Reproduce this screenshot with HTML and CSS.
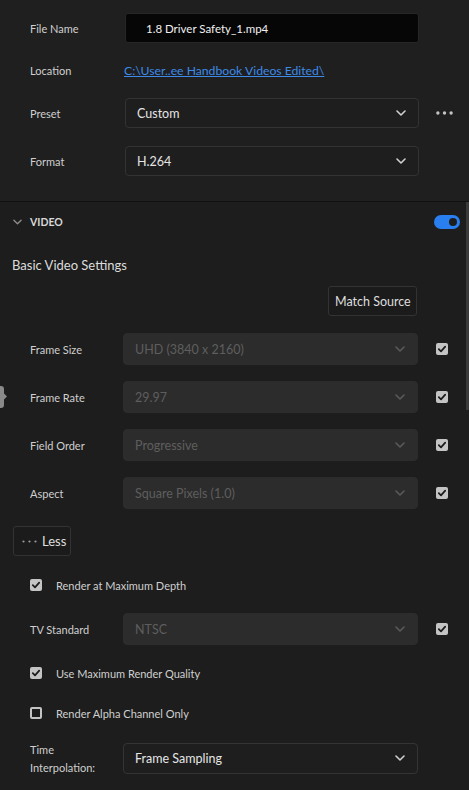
FILE: index.html
```html
<!DOCTYPE html>
<html>
<head>
<meta charset="utf-8">
<link rel="stylesheet" href="styles.css">
</head>
<body>
<div class="panel">
  <section class="top">
    <div class="trow r1">
      <span class="label">File Name</span>
      <div class="input">1.8 Driver Safety_1.mp4</div>
    </div>
    <div class="trow r2">
      <span class="label">Location</span>
      <a class="link" href="#">C:\User..ee Handbook Videos Edited\</a>
    </div>
    <div class="trow r3">
      <span class="label">Preset</span>
      <div class="select">Custom<svg class="chev" viewBox="0 0 10 6"><path d="M1 1l4 4 4-4"/></svg></div>
      <svg class="more" viewBox="0 0 18 4"><circle cx="2" cy="2" r="1.8"/><circle cx="9" cy="2" r="1.8"/><circle cx="16" cy="2" r="1.8"/></svg>
    </div>
    <div class="trow r4">
      <span class="label">Format</span>
      <div class="select">H.264<svg class="chev" viewBox="0 0 10 6"><path d="M1 1l4 4 4-4"/></svg></div>
    </div>
  </section>

  <section class="video">
    <div class="vhead">
      <svg class="hchev" viewBox="0 0 10 6"><path d="M1 1l4 4 4-4"/></svg>
      <span class="vtitle">VIDEO</span>
      <span class="toggle"><span class="knob"></span></span>
    </div>
    <div class="subtitle">Basic Video Settings</div>
    <div class="matchrow"><button class="btn">Match Source</button></div>

    <div class="srow first">
      <span class="label">Frame Size</span>
      <div class="select dis">UHD (3840 x 2160)<svg class="chev" viewBox="0 0 10 6"><path d="M1 1l4 4 4-4"/></svg></div>
      <span class="cb on"><svg viewBox="0 0 12 12"><path d="M2.8 6.2l2.2 2.2 4.2-4.8"/></svg></span>
    </div>
    <div class="srow">
      <span class="label">Frame Rate</span>
      <div class="select dis">29.97<svg class="chev" viewBox="0 0 10 6"><path d="M1 1l4 4 4-4"/></svg></div>
      <span class="cb on"><svg viewBox="0 0 12 12"><path d="M2.8 6.2l2.2 2.2 4.2-4.8"/></svg></span>
    </div>
    <div class="srow">
      <span class="label">Field Order</span>
      <div class="select dis">Progressive<svg class="chev" viewBox="0 0 10 6"><path d="M1 1l4 4 4-4"/></svg></div>
      <span class="cb on"><svg viewBox="0 0 12 12"><path d="M2.8 6.2l2.2 2.2 4.2-4.8"/></svg></span>
    </div>
    <div class="srow">
      <span class="label">Aspect</span>
      <div class="select dis">Square Pixels (1.0)<svg class="chev" viewBox="0 0 10 6"><path d="M1 1l4 4 4-4"/></svg></div>
      <span class="cb on"><svg viewBox="0 0 12 12"><path d="M2.8 6.2l2.2 2.2 4.2-4.8"/></svg></span>
    </div>

    <div class="lessrow"><button class="btn less"><svg class="dots" viewBox="0 0 15 3"><circle cx="1.5" cy="1.5" r="1.1"/><circle cx="7.5" cy="1.5" r="1.1"/><circle cx="13.5" cy="1.5" r="1.1"/></svg>Less</button></div>

    <div class="crow c1">
      <span class="cb on"><svg viewBox="0 0 12 12"><path d="M2.8 6.2l2.2 2.2 4.2-4.8"/></svg></span>
      <span class="ctext">Render at Maximum Depth</span>
    </div>
    <div class="srow tv">
      <span class="label">TV Standard</span>
      <div class="select dis">NTSC<svg class="chev" viewBox="0 0 10 6"><path d="M1 1l4 4 4-4"/></svg></div>
      <span class="cb on"><svg viewBox="0 0 12 12"><path d="M2.8 6.2l2.2 2.2 4.2-4.8"/></svg></span>
    </div>
    <div class="crow c2">
      <span class="cb on"><svg viewBox="0 0 12 12"><path d="M2.8 6.2l2.2 2.2 4.2-4.8"/></svg></span>
      <span class="ctext">Use Maximum Render Quality</span>
    </div>
    <div class="crow c3">
      <span class="cb off"></span>
      <span class="ctext">Render Alpha Channel Only</span>
    </div>
    <div class="srow ti">
      <span class="label two">Time<br>Interpolation:</span>
      <div class="select">Frame Sampling<svg class="chev" viewBox="0 0 10 6"><path d="M1 1l4 4 4-4"/></svg></div>
    </div>
  </section>

  <span class="handle"><svg viewBox="0 0 4 8"><path d="M0 0l4 4-4 4z"/></svg></span>
  <span class="scrollbar"></span>
</div>
</body>
</html>
```
FILE: styles.css
```css
* { box-sizing: border-box; }
html, body { margin: 0; padding: 0; }
body {
  background: #1d1d1d;
  font-family: Lato, "Noto Sans", sans-serif;
  color: #d6d6d6;
  width: 469px;
  height: 790px;
  overflow: hidden;
}
.panel { position: relative; width: 469px; height: 790px; }

.label { font-size: 11px; color: #cfcfcf; }

.top {
  background: #1f1f1f;
  padding: 13px 0 25px 30px;
  border-bottom: 1px solid #111;
}
.trow {
  display: grid;
  grid-template-columns: 95px 294px 1fr;
  align-items: center;
  height: 30px;
}
.r2 { margin-top: 12px; }
.r3 { margin-top: 13px; }
.r4 { margin-top: 18px; }

.input {
  height: 30px;
  background: #060606;
  border: 1px solid #262626;
  border-radius: 3px;
  color: #f0f0f0;
  font-size: 11.5px;
  display: flex;
  align-items: center;
  padding-left: 20px;
}
.link {
  color: #3d8ae8;
  font-size: 12.2px;
  text-decoration: underline;
  margin-left: -1px;
}
.select {
  height: 30px;
  background: #1e1e1e;
  border: 1px solid #333;
  border-radius: 4px;
  color: #e4e4e4;
  font-size: 12.5px;
  display: flex;
  align-items: center;
  justify-content: space-between;
  padding: 0 12px 0 11px;
}
.chev { width: 10px; height: 6px; fill: none; stroke: #d0d0d0; stroke-width: 1.6; stroke-linecap: round; stroke-linejoin: round; }
.more { width: 17px; height: 4px; fill: #c4c4c4; margin-left: 17px; }

.vhead {
  display: flex;
  align-items: center;
  height: 39px;
  padding: 0 9px 0 13px;
}
.hchev { width: 9px; height: 6px; fill: none; stroke: #8c8c8c; stroke-width: 1.5; stroke-linecap: round; stroke-linejoin: round; }
.vtitle { font-size: 10.5px; font-weight: 700; color: #d8d8d8; margin-left: 8px; flex: 1; }
.toggle {
  width: 26px; height: 14px;
  background: #2a7ff0;
  border-radius: 7px;
  position: relative;
}
.knob {
  position: absolute; right: 1px; top: 1px;
  width: 12px; height: 12px;
  border-radius: 50%;
  background: #1d1d1d;
  border: 2px solid #2a7ff0;
}
.subtitle { font-size: 13px; color: #dcdcdc; padding-left: 12px; margin-top: 14px; line-height: 20px; }
.matchrow { display: flex; justify-content: flex-end; padding-right: 52px; margin-top: 11px; }
.btn {
  font-family: inherit;
  height: 30px;
  background: #1b1b1b;
  border: 1px solid #333;
  border-radius: 3px;
  color: #dedede;
  font-size: 12.5px;
  padding: 0 6px;
  white-space: nowrap;
}
.matchrow .btn { width: 89px; }

.srow {
  display: grid;
  grid-template-columns: 93px 295px 1fr;
  align-items: center;
  padding-left: 30px;
  height: 32px;
  margin-top: 16px;
}
.srow.first { margin-top: 17px; }
.srow .select { height: 32px; }
.select.dis { background: #2c2c2c; border-color: #2c2c2c; color: #5e5e5e; }
.select.dis .chev { stroke: #5a5a5a; }
.srow .cb { margin-left: 18px; }

.cb {
  width: 12px; height: 12px;
  border-radius: 2px;
  display: inline-flex;
}
.cb.on { background: #c4c4c4; }
.cb.on svg { width: 12px; height: 12px; fill: none; stroke: #1a1a1a; stroke-width: 1.7; stroke-linecap: round; stroke-linejoin: round; }
.cb.off { border: 2px solid #c4c4c4; background: #1d1d1d; }

.lessrow { padding-left: 13px; margin-top: 17px; }
.less { width: 58px; padding: 0 0 0 8px; text-align: left; font-size: 13px; display: flex; align-items: center; }
.dots { width: 15px; height: 3px; fill: #9a9a9a; margin-right: 5px; }

.crow {
  display: flex; align-items: center;
  padding-left: 30px;
  height: 20px;
}
.ctext { font-size: 11px; color: #cfcfcf; margin-left: 14px; }
.c1 { margin-top: 19px; }
.srow.tv { margin-top: 18px; }
.c2 { margin-top: 18px; }
.c3 { margin-top: 20px; }
.srow.ti { margin-top: 16px; height: 31px; }
.srow.ti .select { height: 31px; background: #1e1e1e; border-color: #343434; color: #e6e6e6; }
.label.two { line-height: 18px; margin-top: 2px; }

.handle {
  position: absolute; left: 0; top: 386px;
  width: 4px; height: 22px;
  background: #8a8a8a;
  border-radius: 0 3px 3px 0;
}
.handle svg { position: absolute; left: 4px; top: 7px; width: 3px; height: 7px; fill: #8a8a8a; }
.scrollbar {
  position: absolute; right: 0; top: 202px;
  width: 3px; height: 208px;
  background: #3a3a3a;
}
```
